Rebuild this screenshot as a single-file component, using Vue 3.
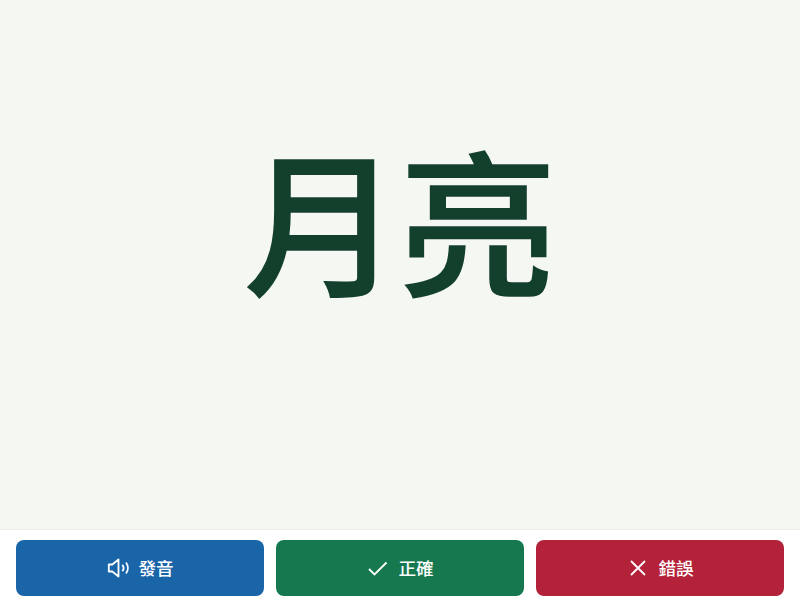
<template>
  <div class="card-page">
    <main class="word-area">
      <h1 class="word">月亮</h1>
    </main>
    <footer class="actions">
      <button class="btn btn-sound">
        <svg class="icon" viewBox="0 0 24 24" fill="none" stroke="currentColor" stroke-width="1.8" stroke-linejoin="round">
          <path d="M2.8 8.5v7h3.5l6.2 5V3.5L6.3 8.5H2.8z" />
          <path d="M16.3 8.8a5 5 0 0 1 0 6.4" />
          <path d="M20 6.5a9 9 0 0 1 0 11" />
        </svg>
        <span>發音</span>
      </button>
      <button class="btn btn-right">
        <svg class="icon" viewBox="0 0 24 24" fill="none" stroke="currentColor" stroke-width="1.8">
          <path d="M3 13l5.5 5.5L20.5 6.5" />
        </svg>
        <span>正確</span>
      </button>
      <button class="btn btn-wrong">
        <svg class="icon" viewBox="0 0 24 24" fill="none" stroke="currentColor" stroke-width="1.8">
          <path d="M5 5l14 14M19 5L5 19" />
        </svg>
        <span>錯誤</span>
      </button>
    </footer>
  </div>
</template>

<script setup>
</script>

<style>
html, body {
  margin: 0;
  background: #f5f7f3;
}
</style>

<style scoped>
.card-page {
  width: 800px;
  height: 600px;
  display: flex;
  flex-direction: column;
  background: #f5f7f3;
  font-family: "Noto Sans CJK TC", "Noto Sans", sans-serif;
}

.word-area {
  flex: 1;
  display: flex;
  align-items: center;
  justify-content: center;
  padding-bottom: 98px;
}

.word {
  margin: 0;
  font-size: 156px;
  font-weight: 500;
  -webkit-text-stroke: 1.5px #133f2d;
  line-height: 1;
  color: #133f2d;
}

.actions {
  display: flex;
  gap: 12px;
  padding: 10px 16px 4px;
  border-top: 1px solid #eceeea;
  background: #fff;
}

.btn {
  flex: 1;
  height: 56px;
  border: none;
  border-radius: 8px;
  display: flex;
  align-items: center;
  justify-content: center;
  gap: 8px;
  color: #fff;
  font-family: inherit;
  font-size: 17.6px;
  font-weight: 500;
}

.btn span {
  padding-bottom: 2px;
}

.icon {
  width: 24px;
  height: 24px;
}

.btn-sound { background: #1a64a8; }
.btn-right { background: #16784f; }
.btn-wrong { background: #b32238; }
</style>
